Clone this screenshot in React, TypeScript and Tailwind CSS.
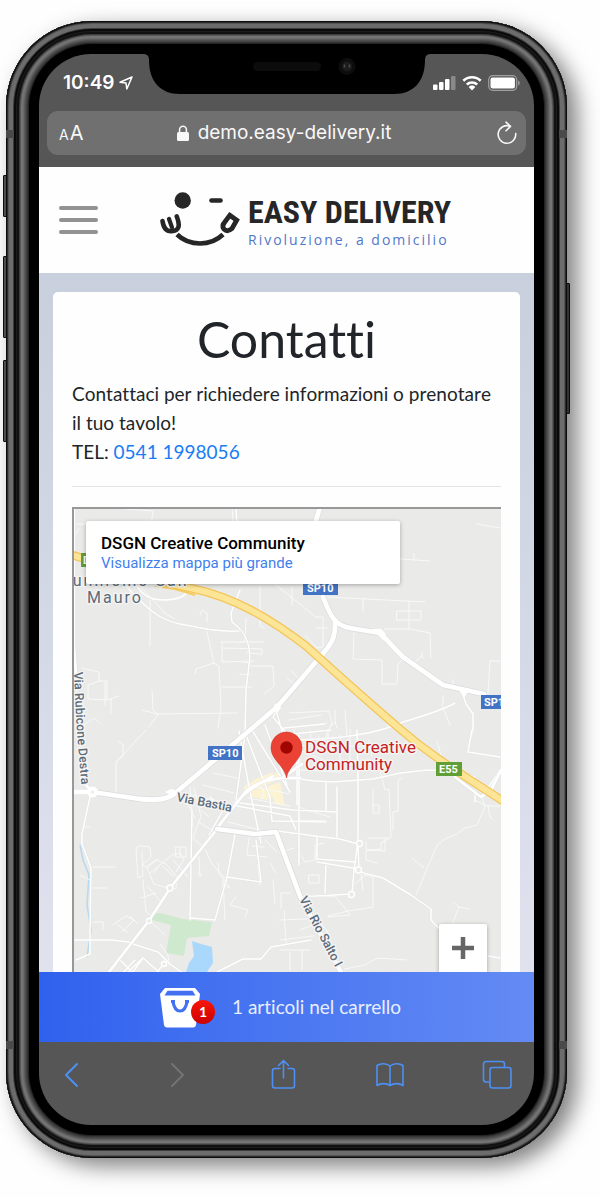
import React from "react";

function StatusBar() {
  return (
    <div className="grid h-[57px] grid-cols-[minmax(0,1fr)_276px_minmax(0,1fr)] items-start">
      <div className="flex items-center gap-1 pt-[15px] pl-6 text-[19px] leading-7 font-semibold text-white">
        <span>10:49</span>
        <svg className="h-4 w-4 shrink-0" viewBox="0 0 16 16" fill="none" stroke="currentColor" strokeWidth="1.5" strokeLinejoin="round" aria-hidden="true">
          <path d="M14 2 2 7.3 8 8l.8 6z" />
        </svg>
      </div>
      <svg className="h-10 w-[276px] overflow-visible" viewBox="0 0 276 40" aria-hidden="true">
        <path d="M-6 0C-2 0 0 2 0 6C0 27 11 40 31 40H245C265 40 276 27 276 6C276 2 278 0 282 0z" fill="#000" />
        <rect x="104" y="8" width="68" height="9" rx="4.5" fill="#0c0c0c" />
        <circle cx="198" cy="12.500" r="8.500" fill="#0d0d0d" />
        <circle cx="198" cy="12.500" r="5" fill="#1c1c1e" />
        <path d="M195.500 10.500v3M200.500 10.500v3" stroke="#4a4a4a" strokeWidth="1.500" />
      </svg>
      <div className="flex items-center gap-[6px] pt-[21px] pl-2 text-white">
        <svg className="h-4 w-[23px] shrink-0" viewBox="0 0 23 16" fill="currentColor" aria-label="Segnale">
          <rect x="0" y="9.500" width="4.500" height="5.500" rx="1" />
          <rect x="6" y="7" width="4.500" height="8" rx="1" />
          <rect x="12" y="4" width="4.500" height="11" rx="1" />
          <rect x="18" y="1" width="4.500" height="14" rx="1" opacity=".3" />
        </svg>
        <svg className="h-4 w-5 shrink-0" viewBox="0 0 20 16" fill="none" stroke="currentColor" strokeWidth="2.600" aria-label="Wi-Fi">
          <path d="M1.300 5.800a12.600 12.600 0 0 1 17.400 0M4.800 9.500a7.700 7.700 0 0 1 10.400 0" />
          <path d="M10 15.500l-3.400-3.600a5 5 0 0 1 6.800 0z" fill="currentColor" stroke="none" />
        </svg>
        <svg className="h-4 w-8 shrink-0" viewBox="0 0 32 16" fill="none" aria-label="Batteria">
          <rect x=".7" y=".7" width="28" height="14.600" rx="4" stroke="#a0a0a0" strokeWidth="1.200" />
          <rect x="2.500" y="2.600" width="24.400" height="10.800" rx="2" fill="#fff" />
          <path d="M30.200 5.500c2 1 2 4 0 5z" fill="#a0a0a0" />
        </svg>
      </div>
    </div>
  );
}

function AddressBar() {
  return (
    <div className="mx-2 flex h-11 items-center rounded-[11px] bg-[#707070] pr-[9px] pl-3 text-[#f8f8f8]">
      <button type="button" className="flex w-8 items-baseline gap-px" aria-label="Dimensione testo">
        <span className="text-[14px] leading-4">A</span>
        <span className="text-[20px] leading-6">A</span>
      </button>
      <a href="#sito" className="flex flex-1 items-center justify-center gap-[9px] pr-3 text-[19px] leading-6">
        <svg className="h-4 w-3" viewBox="0 0 12 16" aria-hidden="true">
          <rect x="0" y="7" width="12" height="9" rx="1.500" fill="currentColor" />
          <path d="M2.600 8V4.600a3.400 3.400 0 0 1 6.800 0V8" fill="none" stroke="currentColor" strokeWidth="1.500" />
        </svg>
        demo.easy-delivery.it
      </a>
      <button type="button" className="ml-2" aria-label="Ricarica">
        <svg className="h-6 w-5" viewBox="0 0 20 24" fill="none" stroke="currentColor" strokeWidth="1.600" strokeLinecap="round" strokeLinejoin="round">
          <path d="M18.700 12.500A8.800 8.800 0 1 1 13 5.200" />
          <path d="M9 1.200l4.500 4.200-4.500 4.400" />
        </svg>
      </button>
    </div>
  );
}

function Logo() {
  return (
    <a href="#home" className="flex items-start" aria-label="Easy Delivery">
      <svg className="h-14 w-[82px] shrink-0" viewBox="0 0 82 56" fill="none" stroke="#262626" aria-hidden="true">
        <circle cx="22.700" cy="8.500" r="8.200" fill="#262626" stroke="none" />
        <path d="M51.500 8.500H60.500" strokeWidth="4.600" strokeLinecap="round" />
        <path d="M17 42.500C29.500 54.500 50.500 54.500 63 42.500" strokeWidth="4.600" />
        <g strokeLinecap="round" strokeLinejoin="round">
          <path d="M2.500 29C3.500 36 6 39.500 11.500 39.200C19 38.800 20.500 34 16.800 24.500" strokeWidth="4.600" />
          <path d="M9 27L12 35.500" strokeWidth="4.200" />
        </g>
        <path d="M69.800 23.300L76.700 28.200L72 36.500Q67.500 40.500 63.800 37Q61.500 33.500 64.500 30.500z" strokeWidth="4.800" />
      </svg>
      <span className="flex flex-col pl-[6px] whitespace-nowrap">
        <span className="font-['Roboto_Condensed','Liberation_Sans_Narrow','Roboto',sans-serif] text-[32px] leading-10 font-bold text-[#262626]">EASY DELIVERY</span>
        <span className="font-['Open_Sans',sans-serif] text-[14px] leading-4 tracking-[2px] text-[#5277c8]">Rivoluzione, a domicilio</span>
      </span>
    </a>
  );
}

const minorRoads =
  "M74 524h12M75 536l4-8M126 509l27 2-2 15M232 507l2 25M140 586l26 28 9 5M200 615l2-5 5 3v9M150 600v46M206 628l8 35-18 6-1 5M214 663l5 3 2 42-3 20M221 642h42M222 642v20l32-1M222 648l40 1v5l-15-1M222 687h30M240 674l10 1M243 662l8 1M251 666l22 0 1 20-10 8M246 618l-1 23-6 2M260 586v40l4 2M276 585l40 32 7 0v30l-6 1-12-13M292 587v18M327 597l98 5M363 598v13M397 611h24v9h-24zM409 601v28M385 629h25l20 4 1 25M354 633l-1 26 29 1v24h15l1-20 8-8M415 662l7-6v-4M421 656l3 2M316 628h12M400 559l30 2M414 554v6M477 524l23 4M500 661h-10l-2 33M387 712l1 16M345 710l2 26M369 740l3 16M443 696v8M453 680v7M437 741l4 14M473 712l0 20-5 14M82 668l17 4v9l-11 4v14l19 1 12-4M105 682v23M111 699v14M99 681l8 0v18M80 728l14-10 6 5M142 710l15 4 80-1M152 690l1 20 5 4-9 13M116 793v-31l30-32M116 762l7-6v-12l-5-3M93 793l-10 2M90 827h-5M93 867l22 0M93 888h14M93 922h10v8M137 850l-1-2 3-2 11 1 1 10-8 7 3 4 12-9M136 850l2 28 5-2-1-24M147 866l9-6 10 4 11 13-1 12-12-2-10-3zM150 873l22-18 8-2 4 6-8 13M154 873l5-7M163 866l10 10M143 880l3 31 6 6M141 898l15-5M147 886l15 17M176 847h10v10h-10zM180 848v8M173 860l15 17M187 864l1 2M113 925l13-9 8 4-12 12M118 925l10 8M130 916l8 8M150 921l15 14M160 944l8 11 1 10M194 788l7 28-8 22M188 804l7 14M193 838l10 9M201 810l8 7M209 801l12 6M198 822l18 10M205 849l7 15 11 12 4 4M199 857l1 20M198 873l4 2M218 863l1 10 11 15-8-3M236 897l-6 8 18 5-3 7M213 773l24 5M203 785l31 8M191 795l36 8M190 787l3 40M246 785l44 9M248 798l42 8M262 800l2-12M228 822l40 10M223 828l38 10M249 838l-2 17 20 2M252 846l12 1M258 865l2 20M265 840l12 12M270 863l6 10M280 852l14-4M273 880l2 24M281 908v-15l9 0M279 920l28-1M284 910l2 34M300 770l38 2M302 746h70M310 731l3 22M328 730v20M340 735v38M350 730v40M284 744l40 16M289 713l40-2 3 12-8 18M289 720l32-5M302 726l25-3M284 700l20-20M291 671l10 10M287 678l9 8M335 710v12l-4 4M335 722l2 6M317 746l2-10M296 742l-2-12M298 807l32 10M300 820l26 1M301 855l4 7 10-2v-9M309 875h10v8h-10zM316 860l-1-15 9-2M320 896l16 1 14 18-22 2M355 884l10-9 8 2v30l-25 4-20 5M363 890l-2-16M370 780l14-4 2-14M380 770l5 20 4-1 2 48-10 6 0 6-15 1 0-8M373 789v24h6v-8h-6M393 830v-18l5-1v-30l4-3M368 838h20M370 850l15 1v-12M412 858l12 10M378 850l-12 1v9l11 3M416 895l21-50 8-6 12-5 8-6 12-3 8-18-4-12M475 800l12 6h13M488 805l2 12 3 2M450 725l-8-20M280 940l34-4M280 950h30M290 952v18M302 950v20M340 970l25-5 12-7 30 2M452 925l7-18 10 2M459 907l-5-4M300 930l20-8 8 10-2 8M225 920l-2-40M80 875l10 5";

const localRoads =
  "M126 586C148 610 160 620 180 624S217 632 239 631M74 940h38l16 2 8 3 22 7 12 12 14 10M76 960l14-6v-24l1-62-9-24 0-10 9-42M236 507l1 20M240 590l-9 23 1 9C246 632 252 645 249 665L246 690 245 735 236 800M239 731l10 56 12 56M246 735l24 62 2 24 54 1M252 730l38 62M265 725l22 60M276 710l7 25 48-5M284 728l41-4M283 740c50 0 92-5 120-18 24-7 40-12 52-19M299 779l16 2 18 1 40-3 28-6 26-3 28 1 20 6M360 690l0 4M357 730l1 45 0 66-4 29-2 24-54 3M297 745v60M326 783v27M299 735v130M234 802l59 8 44 2M237 806l53 10 6 14M270 830l45 6 25 3 18 5 1 25-42-7M317 837l0 22 39 3M326 863l-1 30M337 837v-50M356 871l27 7 28 17 20 14v11l16 17M488 956l12 2M235 834l-8 43 34 5-5-42M227 877l-12 43-24-2M192 810l-2 110M213 974l14-7 16-8h18l10-12 40-7M128 972l15-14 16 14M120 960l14 14M135 960l-15 16M143 958l-10 14M164 964l-8 9M462 692l4 12 7 10v16M472 730l-4 22 32 5M500 770l-12 18M475 790v12M210 797l13 13-14 25M283 697l-10 20 20 24";

const midRoads =
  "M74 507v140L77 690M82 780L92 792M217 829C224 818 236 805 243 795S265 780 282 778L300 778M282 778L302 764M250 730L173 795M217 829L171 887 148 922 130 945 109 972M273 776C254 786 243 794 236 803M455 777l26 20 10-7 10-20";

function MapDrawing() {
  return (
    <svg
      className="absolute inset-0 h-full w-full font-['Roboto',sans-serif]"
      viewBox="74 509 427 463"
      preserveAspectRatio="xMidYMin slice"
      fill="none"
      role="img"
      aria-label="Mappa"
    >
      <rect x="0" y="400" width="700" height="700" fill="#eaeae8" />
      <path d="M152 914l8-1 23 6 29 3-3 14-22 2-3 18-18-3 5-28-20-5z" fill="#cfe9cf" />
      <path d="M192 941l9 3 11 3 1 16-6 9h-21l3-9 5-7z" fill="#aad8fd" />
      <path d="M80 845l3 15 6 15-2 30 4 25-4 27" stroke="#b7d8ef" strokeWidth="1.500" />
      <path d="M243 788l13-9 14-6 10 0-2 7-17 7-12 6zM250 792l12-4 18-6 5 24-10-2-3-8-5 4-16-3z" fill="#fcf3d2" />
      <g strokeLinecap="round" strokeLinejoin="round" stroke="#fff">
        <path d={minorRoads} strokeWidth="1" stroke="#f8f9fa" />
        <path d={localRoads} strokeWidth="2.200" stroke="#dcdde0" opacity=".5" />
        <path d={localRoads} strokeWidth="1.500" />
        <path d={midRoads} strokeWidth="3.600" stroke="#dcdde0" />
        <path d={midRoads} strokeWidth="2.800" />
        <g stroke="#d9dbdd" strokeWidth="6">
          <path d="M335 620C336 634 334 642 320 657L277 707L250 730L173 795C163 801 150 800 140 799L92 792H74" />
          <path d="M320 507l-6 20M323 597C330 615 334 625 350 628L380 633L403 657L443 685L484 694" />
          <path d="M217 829l38 5 21-2 24 64 43 80" />
        </g>
        <path d="M335 620C336 634 334 642 320 657L277 707L250 730L173 795C163 801 150 800 140 799L92 792H74" strokeWidth="4.800" />
        <path d="M320 507l-6 20M323 597C330 615 334 625 350 628L380 633L403 657L443 685L484 694" strokeWidth="4.800" />
        <path d="M217 829l38 5 21-2 24 64 43 80" strokeWidth="4.600" />
      </g>
      <g stroke="#fff" strokeWidth="1.500" fill="#eaeae8">
        <circle cx="92.500" cy="792" r="3.500" strokeWidth="4" />
        <circle cx="170" cy="888" r="3" />
        <circle cx="359.500" cy="843.500" r="3" />
        <circle cx="358.500" cy="870" r="3" />
        <circle cx="351.500" cy="894.500" r="3" />
        <circle cx="164" cy="964" r="2.500" />
        <circle cx="149" cy="921" r="2.500" />
      </g>
      <path d="M372 629l9 0 5 5-3 6zM459 690l10 0-5 8zM274 705l5-3 2 6-5 6zM165 792l6-3 8 2-6 6z" fill="#fff" />
      <path d="M136 584q8 16 27 16t24-8" stroke="#fff" strokeWidth="1.500" />
      <path d="M155 586l20 3 20 6" stroke="#f5cb62" strokeWidth="2" />
      <path d="M66 553C110 567 150 580 190 588C235 597 272 620 306 646C346 682 366 700 400 729C430 755 455 770 506 803" stroke="#f3c65b" strokeWidth="8.500" />
      <path d="M66 553C110 567 150 580 190 588C235 597 272 620 306 646C346 682 366 700 400 729C430 755 455 770 506 803" stroke="#fde598" strokeWidth="6" />
      <g fill="#4273c4">
        <rect x="303" y="580" width="35" height="15" />
        <rect x="208" y="746" width="34" height="14" />
        <rect x="481" y="695" width="34" height="14" />
      </g>
      <rect x="81" y="553" width="30" height="14" fill="#5f9f35" />
      <rect x="436" y="762" width="26" height="14" fill="#5f9f35" />
      <g fill="#fff" fontSize="11" fontWeight="700">
        <text x="307" y="592">SP10</text>
        <text x="212" y="757">SP10</text>
        <text x="484" y="706">SP10</text>
        <text x="439" y="773">E55</text>
        <text x="83" y="564">D</text>
      </g>
      <g fill="#5d6b7a" stroke="#f4f4f3" strokeWidth="3" paintOrder="stroke" strokeLinejoin="round">
        <g fontSize="16" letterSpacing="2">
          <text x="54" y="586">Giunniomo San</text>
          <text x="87" y="603">Mauro</text>
        </g>
        <g fontSize="12.500" fontWeight="500">
          <text transform="translate(176 801) rotate(11)">Via Bastia</text>
          <text transform="translate(299 899) rotate(62)">Via Rio Salto I</text>
          <path id="rubicone" d="M74 672C75 705 77 740 83 800" fill="none" stroke="none" />
          <text><textPath href="#rubicone">Via Rubicone Destra</textPath></text>
        </g>
        <g fill="#c5221f" fontSize="17">
          <text x="305" y="753">DSGN Creative</text>
          <text x="305" y="770">Community</text>
        </g>
      </g>
      <path d="M286.500 778C285 766 271 760 271 747.500a15.500 15.500 0 0 1 31 0C302 760 288 766 286.500 778z" fill="#ea4335" stroke="#d33426" strokeWidth=".6" />
      <circle cx="286.500" cy="747.500" r="6.200" fill="#9f0600" />
    </svg>
  );
}

function ContactCard() {
  return (
    <main className="bg-linear-to-b from-[#c8cfdd] to-[#e0e2ee] px-[14px] pt-[19px]">
      <section className="rounded-t-[5px] bg-[#fefefe] px-[19px] pt-[17px] font-['Lato',sans-serif] text-[#212529] [font-variant-ligatures:none]">
        <h1 className="text-center text-[50px] leading-[60px]">Contatti</h1>
        <p className="mt-[10px] text-[19px] leading-[29px] [font-kerning:none]">
          Contattaci per richiedere informazioni o prenotare il tuo tavolo!
        </p>
        <p className="text-[19px] leading-[29px]">
          TEL: <a href="tel:05411998056" className="text-[#1a7cf5]">0541 1998056</a>
        </p>
        <hr className="mt-5 border-[#e4e4e5]" />
        <div className="relative mt-5 h-[465px] overflow-hidden border-t-2 border-l-2 border-[#989898]">
          <MapDrawing />
          <div className="absolute top-3 left-3 flex h-[63px] w-[314px] flex-col rounded-[2px] bg-white pt-[11px] pl-[15px] font-['Roboto',sans-serif] shadow-[0_1px_4px_rgba(0,0,0,0.3)]">
            <strong className="text-[17px] leading-[22px] font-medium text-black">DSGN Creative Community</strong>
            <a href="#mappa" className="text-[15px] leading-[18px] text-[#427fed]">Visualizza mappa più grande</a>
          </div>
          <button type="button" aria-label="Aumenta lo zoom" className="absolute right-[14px] bottom-0 flex h-12 w-12 items-center justify-center rounded-t-[2px] bg-white text-[#666] shadow-[0_1px_4px_rgba(0,0,0,0.3)]">
            <svg className="h-[22px] w-[22px]" viewBox="0 0 22 22" fill="none" stroke="currentColor" strokeWidth="4.500">
              <path d="M11 0v22M0 11h22" />
            </svg>
          </button>
        </div>
      </section>
    </main>
  );
}

function CartBar() {
  return (
    <button type="button" className="flex h-[70px] w-full items-center justify-center gap-4 bg-linear-to-r from-[#3061ee] to-[#648bf4] pr-3 font-['Lato',sans-serif] text-[19px] leading-6 text-[#e8eeff] [font-variant-ligatures:none]">
      <span className="relative pt-[2px]">
        <svg className="mr-4 block h-10 w-10" viewBox="0 0 40 40" aria-hidden="true">
          <path d="M5 0H35L40 6 36 37Q35.500 39.500 33 39.500H7Q4.500 39.500 4 37L0 6z" fill="#fff" />
          <path d="M7.500 2.800H32.500L35.500 7.500H4.500z" fill="#4270f0" />
          <path d="M11 13.500H15M25 13.500H29M13 13.500C14 20 16 23 20 23S26 20 27 13.500" fill="none" stroke="#4270f0" strokeWidth="3.200" />
        </svg>
        <span className="absolute top-[14px] right-px flex h-6 w-6 items-center justify-center rounded-full bg-linear-to-b from-[#fa1508] to-[#cb0000] text-[14px] leading-4 font-bold text-white">1</span>
      </span>
      <span>1 articoli nel carrello</span>
    </button>
  );
}

function ToolBar() {
  return (
    <nav className="flex h-[83px] items-start justify-between pt-[17px] pr-[22px] pl-[19px] text-[#4d90f5]" aria-label="Browser">
      <button type="button" aria-label="Indietro">
        <svg className="h-8 w-7" viewBox="0 0 28 32" fill="none" stroke="currentColor" strokeWidth="2" strokeLinecap="round" strokeLinejoin="round"><path d="M19 5 8 16 19 27" /></svg>
      </button>
      <button type="button" aria-label="Avanti" className="text-[#747474]">
        <svg className="h-8 w-7" viewBox="0 0 28 32" fill="none" stroke="currentColor" strokeWidth="2" strokeLinecap="round" strokeLinejoin="round"><path d="M8 5 19 16 8 27" /></svg>
      </button>
      <button type="button" aria-label="Condividi">
        <svg className="h-8 w-7" viewBox="0 0 28 32" fill="none" stroke="currentColor" strokeWidth="1.600" strokeLinecap="round" strokeLinejoin="round">
          <path d="M10 9.500H5a2.500 2.500 0 0 0-2.500 2.500v14.500A2.500 2.500 0 0 0 5 29h17a2.500 2.500 0 0 0 2.500-2.500v-14.500a2.500 2.500 0 0 0-2.500-2.500H18M13.500 19V2M8.500 6.500 13.500 1.500 18.500 6.500" />
        </svg>
      </button>
      <button type="button" aria-label="Preferiti">
        <svg className="h-8 w-7" viewBox="0 0 28 32" fill="none" stroke="currentColor" strokeWidth="1.600" strokeLinecap="round" strokeLinejoin="round">
          <path d="M14 7C10.500 4 4.500 4 1 6.500V26.500C4.500 24 10.500 24 14 26.500C17.500 24 23.500 24 27 26.500V6.500C23.500 4 17.500 4 14 7zM14 7v19" />
        </svg>
      </button>
      <button type="button" aria-label="Schede">
        <svg className="h-8 w-[30px]" viewBox="0 0 30 32" fill="none" stroke="currentColor" strokeWidth="1.600" strokeLinejoin="round">
          <rect x="8" y="8.500" width="21" height="20.500" rx="2.500" />
          <path d="M7.500 23H4a2.500 2.500 0 0 1-2.500-2.500V5A2.500 2.500 0 0 1 4 2.500H20A2.500 2.500 0 0 1 22.500 5V8" />
        </svg>
      </button>
    </nav>
  );
}

const sideButton = "absolute w-[4px] rounded-[1px] border border-[#111] bg-[#555]";
const antenna = "absolute h-2 w-2 bg-[#4a4a4a]";

export default function App() {
  return (
    <div className="bg-[#fefefe] pt-[21px] pr-[33px] pb-10 pl-[6px] font-['Inter',sans-serif]">
      <div className="relative">
        <i className={`${sideButton} top-[154px] -left-[3px] h-[42px]`} />
        <i className={`${sideButton} top-[235px] -left-[3px] h-[82px]`} />
        <i className={`${sideButton} top-[339px] -left-[3px] h-[82px]`} />
        <i className={`${sideButton} top-[262px] -right-[3px] h-[131px]`} />
        <div className="relative rounded-[86px] bg-black p-[33px] shadow-[inset_0_0_0_1px_#0c0c0c,inset_0_0_0_2px_#2c2c2c,inset_0_0_0_3px_#555,inset_0_0_0_7px_#6c6c6c,inset_0_0_0_8px_#3c3c3c,inset_0_0_0_10px_#0a0a0a,inset_0_0_0_11px_#1c1c1c,inset_0_0_0_13px_#111,inset_0_0_0_14px_#3c3c3c,inset_0_0_0_15px_#5a5a5a,inset_0_0_0_17px_#747474,inset_0_0_0_18px_#6a6a6a,inset_0_0_0_19px_#5c5c5c,inset_0_0_0_20px_#4e4e4e,inset_0_0_0_21px_#424242,inset_0_0_0_22px_#363636,inset_0_0_0_23px_#222,10px_8px_22px_rgba(0,0,0,0.5)]">
          <i className={`${antenna} top-[109px] left-0`} />
          <i className={`${antenna} top-[109px] right-0`} />
          <i className={`${antenna} bottom-[109px] left-0`} />
          <i className={`${antenna} right-0 bottom-[109px]`} />
          <div className="flex flex-col overflow-hidden rounded-[52px] bg-[#565656]">
            <StatusBar />
            <AddressBar />
            <header className="mt-3 flex h-[106px] items-center bg-[#fefefe] pl-5">
              <button type="button" aria-label="Menu" className="mr-[62px] flex w-[39px] flex-col gap-2">
                <i className="h-1 rounded-full bg-[#929292]" />
                <i className="h-1 rounded-full bg-[#929292]" />
                <i className="h-1 rounded-full bg-[#929292]" />
              </button>
              <Logo />
            </header>
            <ContactCard />
            <CartBar />
            <ToolBar />
          </div>
        </div>
      </div>
    </div>
  );
}
